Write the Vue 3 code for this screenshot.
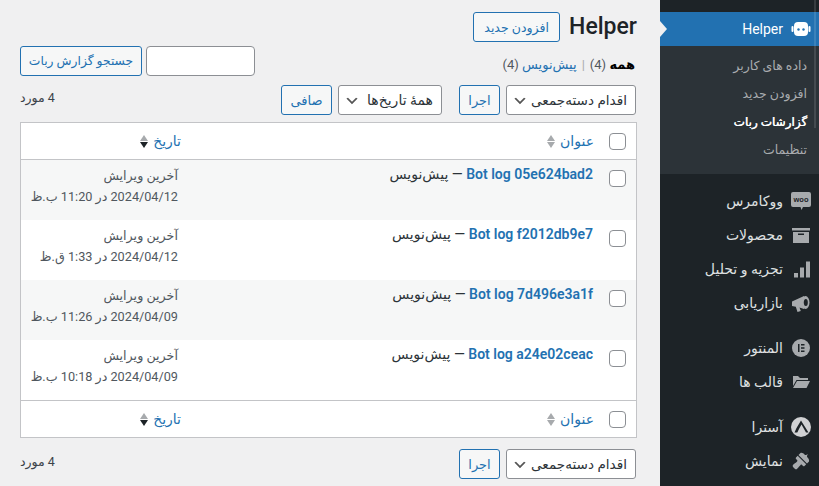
<template>
  <div class="page" dir="rtl">
    <aside class="sidebar">
      <div class="cut-item"><span>ابزارهای وردپرس</span></div>
      <div class="menu-item current">
        <span class="menu-icon">
          <svg viewBox="0 0 20 20" width="20" height="20"><rect x="3" y="3" width="14" height="14" rx="4" fill="#fff"/><rect x="0.5" y="7" width="2" height="6" rx="1" fill="#fff"/><rect x="17.5" y="7" width="2" height="6" rx="1" fill="#fff"/><circle cx="7.5" cy="10.5" r="1.2" fill="#2271b1"/><circle cx="12.5" cy="10.5" r="1.2" fill="#2271b1"/></svg>
        </span>
        <span>Helper</span>
      </div>
      <ul class="submenu">
        <li v-for="s in subItems" :key="s" :class="{ active: s === 'گزارشات ربات' }">{{ s }}</li>
      </ul>
      <div class="menu-group first">
        <div v-for="m in menuA" :key="m.label" class="menu-item">
          <span class="menu-icon" v-html="m.icon"></span>
          <span>{{ m.label }}</span>
        </div>
      </div>
      <div class="menu-group">
        <div v-for="m in menuB" :key="m.label" class="menu-item">
          <span class="menu-icon" v-html="m.icon"></span>
          <span>{{ m.label }}</span>
        </div>
      </div>
      <div class="menu-group">
        <div v-for="m in menuC" :key="m.label" class="menu-item">
          <span class="menu-icon" v-html="m.icon"></span>
          <span>{{ m.label }}</span>
        </div>
      </div>
      <span class="scroll-thumb"></span>
    </aside>

    <main class="content">
      <div class="heading">
        <h1>Helper</h1>
        <button class="btn add-btn">افزودن جدید</button>
      </div>

      <div class="filter-row">
        <div class="views">
          <b>همه</b> <span class="count">(4)</span>
          <span class="sep">|</span>
          <a>پیش‌نویس</a> <span class="count">(4)</span>
        </div>
        <div class="search">
          <input class="search-input" type="text" />
          <button class="btn search-btn">جستجو گزارش ربات</button>
        </div>
      </div>

      <div class="tablenav">
        <select class="sel bulk"><option>اقدام دسته‌جمعی</option></select>
        <button class="btn apply">اجرا</button>
        <select class="sel dates"><option>همهٔ تاریخ‌ها</option></select>
        <button class="btn filter">صافی</button>
        <span class="total">4 مورد</span>
      </div>

      <table class="list">
        <thead>
          <tr>
            <th class="check"><span class="box"></span></th>
            <th class="title-col">
              <span class="head"><a>عنوان</a><span class="sort"><i class="up"></i><i class="down"></i></span></span>
            </th>
            <th class="date-col">
              <span class="head"><a>تاریخ</a><span class="sort"><i class="up"></i><i class="down dark"></i></span></span>
            </th>
          </tr>
        </thead>
        <tbody>
          <tr v-for="r in rows" :key="r.name">
            <td class="check"><span class="box"></span></td>
            <td class="title-col">
              <a class="row-title">{{ r.name }}</a>
              <span class="state"> — پیش‌نویس</span>
            </td>
            <td class="date-col">آخرین ویرایش<br />{{ r.date }}</td>
          </tr>
        </tbody>
        <tfoot>
          <tr>
            <th class="check"><span class="box"></span></th>
            <th class="title-col">
              <span class="head"><a>عنوان</a><span class="sort"><i class="up"></i><i class="down"></i></span></span>
            </th>
            <th class="date-col">
              <span class="head"><a>تاریخ</a><span class="sort"><i class="up"></i><i class="down dark"></i></span></span>
            </th>
          </tr>
        </tfoot>
      </table>

      <div class="tablenav bottom">
        <select class="sel bulk"><option>اقدام دسته‌جمعی</option></select>
        <button class="btn apply">اجرا</button>
        <span class="total">4 مورد</span>
      </div>
    </main>
  </div>
</template>

<script setup>
const subItems = ['داده های کاربر', 'افزودن جدید', 'گزارشات ربات', 'تنظیمات']

const svg = (body) => `<svg viewBox="0 0 20 20" width="20" height="20" fill="#a7aaad">${body}</svg>`

const menuA = [
  {
    label: 'ووکامرس',
    icon: svg('<path d="M2 1h16a2 2 0 0 1 2 2v11a2 2 0 0 1-2 2h-6l-1.500 3-1-3H2a2 2 0 0 1-2-2V3a2 2 0 0 1 2-2z"/><text x="10" y="11" text-anchor="middle" font-family="Liberation Sans, sans-serif" font-weight="700" font-size="7.500" fill="#1d2327" direction="ltr">woo</text>')
  },
  {
    label: 'محصولات',
    icon: svg('<path d="M1 3h18v2.500H1zM2 7h16v11H2zm5 1.500V10h6V8.500z" fill-rule="evenodd"/>')
  },
  {
    label: 'تجزیه و تحلیل',
    icon: svg('<path d="M3 14h4v4.500H3zM9 8.500h4v10H9zM15 2.500h4v16h-4z"/>')
  },
  {
    label: 'بازاریابی',
    icon: svg('<path d="M1 8.500L13 3v13L8.500 14.500l1.300 3.500-3.300 1-1.700-5.300L1 13z"/><ellipse cx="14.500" cy="9.500" rx="4" ry="6.500"/><ellipse cx="14.800" cy="9.500" rx="2" ry="3.600" fill="#1d2327"/>')
  }
]

const menuB = [
  {
    label: 'المنتور',
    icon: svg('<circle cx="10" cy="10" r="9"/><path d="M7 6h1.500v8H7zM10 6h3.500v1.500H10zM10 9.200h3.500v1.500H10zM10 12.500h3.500V14H10z" fill="#1d2327"/>')
  },
  {
    label: 'قالب ها',
    icon: svg('<path d="M2 4h5l2 2h8v2H5.500L2 14zM6 9h13l-3.500 7H2z"/>')
  }
]

const menuC = [
  {
    label: 'آسترا',
    icon: svg('<circle cx="10" cy="10" r="10" fill="#d0d1d3"/><path d="M10 3.500L5.500 11l-2 4.500h2.800l2.200-4.500L10.500 7.500 15 15.500h2.500z" fill="#1d2327"/>')
  },
  {
    label: 'نمایش',
    icon: svg('<path d="M7.500 4L9.500 2C11 1.500 12.500 2.500 13.500 3.500C14.500 4.500 15.500 4 17 3C16 4.500 15.500 5.500 16.500 6.500C17.500 7.500 18.500 9 18 10.500L16 12.500Z"/><path d="M6.700 4.800L15.200 13.300L13.500 15C13.100 15.400 12.500 15.400 12.100 15L11 13.900C10.600 13.500 10 13.500 9.600 13.900C9 14.500 8.300 15.300 7.700 16.100C7.100 16.900 6 18 6 18C5.500 18.500 4.500 18.500 3.500 17.500L2.500 16.500C1.500 15.500 1.500 14.500 2 14C2 14 3.100 12.900 3.900 12.300C4.700 11.700 5.500 11 6.100 10.400C6.500 10 6.500 9.400 6.100 9L5 7.900C4.600 7.500 4.600 6.900 5 6.500Z"/>')
  }
]

const rows = [
  { name: 'Bot log 05e624bad2', date: '2024/04/12 در 11:20 ب.ظ' },
  { name: 'Bot log f2012db9e7', date: '2024/04/12 در 1:33 ق.ظ' },
  { name: 'Bot log 7d496e3a1f', date: '2024/04/09 در 11:26 ب.ظ' },
  { name: 'Bot log a24e02ceac', date: '2024/04/09 در 10:18 ب.ظ' }
]
</script>

<style>
html, body { margin: 0; background: #f0f0f1; overflow: hidden; }
</style>

<style scoped>
.page {
  display: flex;
  height: 486px;
  overflow: hidden;
  background: #f0f0f1;
  color: #3c434a;
  font-family: Roboto, "DejaVu Sans", sans-serif;
  font-size: 13px;
}

/* sidebar */
.sidebar {
  position: relative;
  width: 159px;
  flex: none;
  background: #1d2327;
  color: #f0f0f1;
  font-size: 14px;
}
.scroll-thumb {
  position: absolute;
  top: 0;
  right: 3px;
  width: 2px;
  height: 128px;
  background: rgba(255, 255, 255, 0.12);
}
/* menu item scrolled out of view, only its last pixels are left */
.cut-item {
  height: 12px;
  overflow: hidden;
  padding-right: 36px;
  line-height: 18px;
  color: #a7aaad;
}
.cut-item span {
  display: block;
  margin-top: -20px;
}
.menu-item {
  position: relative;
  height: 34px;
  display: flex;
  align-items: center;
  color: #dfe0e1;
}
.menu-icon {
  width: 36px;
  flex: none;
  display: flex;
  justify-content: center;
  align-items: center;
}
.menu-item.current {
  background: #2271b1;
  color: #fff;
}
.menu-item.current::after {
  content: "";
  position: absolute;
  left: 0;
  top: 9px;
  border: 8px solid transparent;
  border-right: 0;
  border-left: 7px solid #f0f0f1;
}
.submenu {
  list-style: none;
  margin: 0;
  padding: 6px 0 10px;
  background: #2c3338;
  font-size: 12.5px;
  color: #a9acaf;
}
.submenu li {
  height: 28px;
  line-height: 28px;
  padding-right: 12px;
}
.submenu li.active {
  color: #fff;
  font-size: 12px;
  text-shadow: 0.4px 0 0 #fff;
}
.menu-group { padding-top: 11px; }
.menu-group.first { padding-top: 10px; }

/* main */
.content {
  flex: 1;
  padding: 12px 23px 0 20px;
  min-width: 0;
}
.heading {
  display: flex;
  align-items: center;
  gap: 9px;
  height: 30px;
}
h1 {
  margin: 0;
  font-size: 23px;
  font-weight: 500;
  color: #1d2327;
  line-height: 30px;
}
.btn {
  height: 30px;
  padding: 0 10px;
  border: 1px solid #2271b1;
  border-radius: 3px;
  background: #f6f7f7;
  color: #2271b1;
  font: inherit;
  font-size: 13px;
  white-space: nowrap;
}
.add-btn { width: 87px; padding: 0; font-size: 12.5px; }
.search-btn { width: 122px; padding: 0; font-size: 12.3px; }
.filter-row {
  display: flex;
  justify-content: space-between;
  height: 30px;
  margin-top: 4px;
}
.views {
  padding: 6px 2px 0 0;
  line-height: 26px;
  height: 24px;
  color: #3c434a;
}
.views b { color: #000; font-weight: 700; }
.views a { color: #2271b1; }
.count { color: #50575e; }
.sep { color: #a7aaad; margin: 0 5px; }
.search { display: flex; gap: 4px; }
.search-input {
  width: 107px;
  height: 28px;
  padding: 0;
  border: 1px solid #8c8f94;
  border-radius: 4px;
  background: #fff;
}
.tablenav {
  display: flex;
  align-items: center;
  height: 30px;
  margin-top: 9px;
  padding-right: 1px;
}
.sel {
  appearance: none;
  box-sizing: border-box;
  height: 30px;
  padding: 0 8px 0 24px;
  border: 1px solid #8c8f94;
  border-radius: 3px;
  color: #2c3338;
  font: inherit;
  font-size: 14px;
  background: #fff url("data:image/svg+xml;charset=UTF-8,%3Csvg xmlns='http://www.w3.org/2000/svg' width='20' height='20'%3E%3Cpath d='M5 6l5 5 5-5 2 1-7 7-7-7z' fill='%23555'/%3E%3C/svg%3E") no-repeat left 5px top 55% / 16px 16px;
}
.bulk { width: 130px; font-size: 13.6px; }
.dates { width: 104px; }
.apply { margin: 0 6px 0 17px; width: 41px; padding: 0; }
.filter { margin-right: 6px; width: 51px; padding: 0; }
.tablenav.bottom .apply { margin-left: 0; }
.total { margin-right: auto; color: #3c434a; padding-bottom: 6px; font-size: 12.5px; }
.tablenav.bottom { margin-top: 11px; }

/* table */
.list {
  width: 617px;
  margin-top: 7px;
  border: 1px solid #c3c4c7;
  border-collapse: separate;
  border-spacing: 0;
  table-layout: fixed;
  background: #fff;
}
th {
  height: 36px;
  padding: 0;
  font-weight: 400;
  text-align: right;
  font-size: 14px;
}
thead th { border-bottom: 1px solid #c3c4c7; }
tfoot th { border-top: 1px solid #c3c4c7; }
th a { color: #2271b1; }
td {
  box-sizing: border-box;
  height: 60px;
  padding: 0;
  vertical-align: top;
}
tbody tr:nth-child(odd) { background: #f6f7f7; }
.check { width: 42px; }
.box {
  display: block;
  box-sizing: border-box;
  width: 17px;
  height: 17px;
  margin-right: 10px;
  border: 1px solid #8c8f94;
  border-radius: 4px;
  background: #fff;
}
td .box { margin-top: 10px; }
td.title-col {
  padding: 4px 1px 0 0;
  font-size: 14px;
  line-height: 20px;
}
.row-title {
  color: #2271b1;
  font-weight: 600;
}
.state { color: #2c3338; }
.date-col { width: 160px; }
td.date-col {
  padding: 5px 3px 0 0;
  font-size: 12.7px;
  line-height: 21px;
  color: #50575e;
}
.head {
  display: inline-flex;
  align-items: center;
  gap: 5px;
}
.sort {
  display: inline-flex;
  flex-direction: column;
  gap: 1px;
}
.sort i {
  display: block;
  border-left: 4.5px solid transparent;
  border-right: 4.5px solid transparent;
}
.sort .up { border-bottom: 6px solid #a7aaad; }
.sort .down { border-top: 6px solid #a7aaad; }
.sort .down.dark { border-top-color: #1d2327; }
</style>
